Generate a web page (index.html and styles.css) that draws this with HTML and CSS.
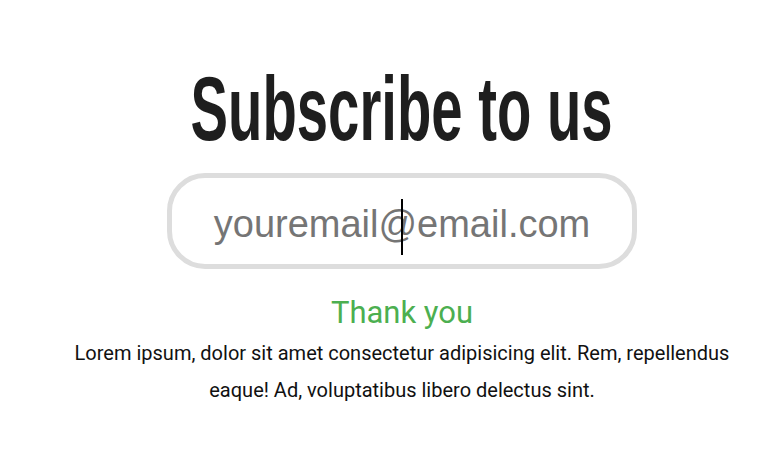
FILE: index.html
```html
<!DOCTYPE html>
<html lang="en">
<head>
<meta charset="utf-8">
<title>Subscribe</title>
<link rel="stylesheet" href="styles.css">
</head>
<body>
<main class="page">
  <section class="subscribe">
    <h1 class="title">Subscribe to us</h1>
    <div class="field">
      <span class="field-text">youremail<span class="at">@<span class="caret"></span></span>email.com</span>
    </div>
    <h2 class="thanks">Thank you</h2>
    <p class="lead">Lorem ipsum, dolor sit amet consectetur adipisicing elit. Rem, repellendus eaque! Ad, voluptatibus libero delectus sint.</p>
  </section>
</main>
</body>
</html>
```
FILE: styles.css
```css
html, body {
  margin: 0;
  padding: 0;
  background: #fff;
}
.page {
  padding-left: 40px;
}
.subscribe {
  max-width: 700px;
  margin: 0 auto;
  display: flex;
  flex-direction: column;
  align-items: center;
  text-align: center;
}
.title {
  margin: 54px 0 0;
  font-family: "Liberation Sans Narrow", "Liberation Sans", sans-serif;
  font-stretch: condensed;
  font-weight: 700;
  font-size: 90px;
  line-height: 110px;
  color: #1e1e1e;
  transform: scaleX(0.625);
}
.field {
  margin-top: 9px;
  width: 460px;
  height: 80px;
  border: 5px solid #dddddd;
  border-radius: 38px;
  display: flex;
  align-items: center;
  justify-content: center;
  padding-top: 6px;
  box-sizing: content-box;
}
.field-text {
  font-family: "Liberation Sans", Arial, sans-serif;
  font-size: 38px;
  color: #757575;
}
.at {
  position: relative;
}
.caret {
  position: absolute;
  left: 22px;
  top: -4px;
  width: 2px;
  height: 56px;
  background: #000;
}
.thanks {
  margin: 24px 0 0;
  font-family: Roboto, sans-serif;
  font-weight: 400;
  font-size: 31px;
  line-height: 40px;
  color: #4caf50;
}
.lead {
  margin: 2px 0 0;
  font-family: Roboto, sans-serif;
  font-size: 20px;
  line-height: 37px;
  color: #111;
}
```
